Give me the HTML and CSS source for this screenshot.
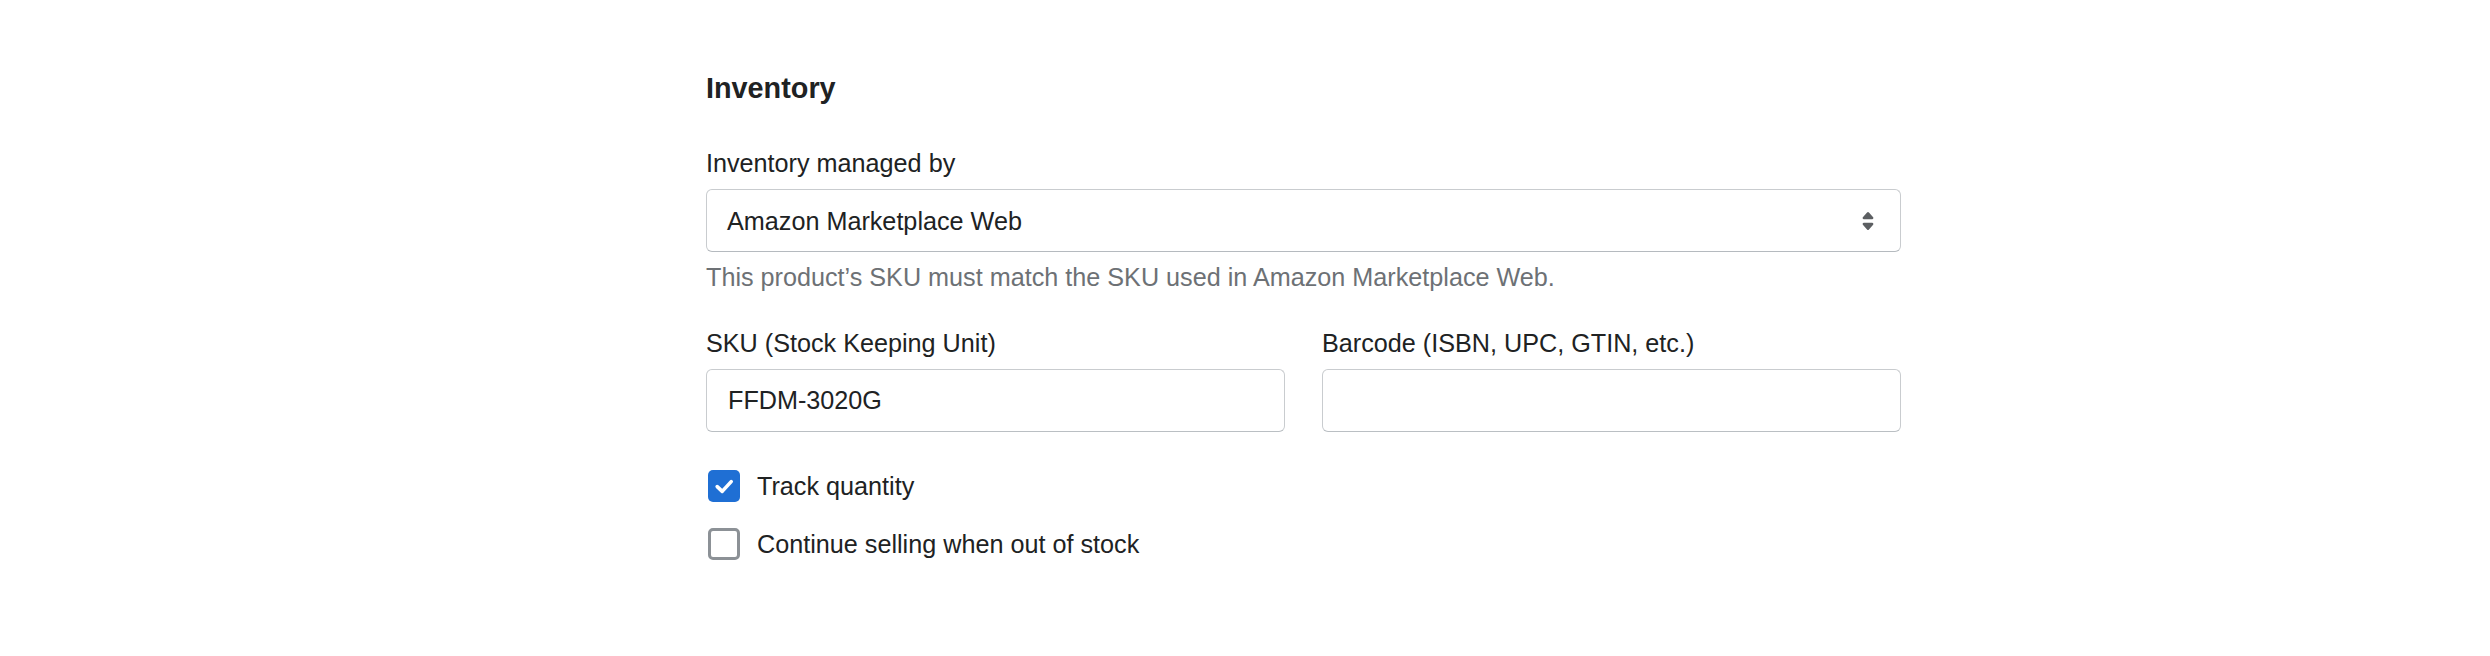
FILE: index.html
```html
<!DOCTYPE html>
<html lang="en">
<head>
<meta charset="utf-8">
<title>Inventory</title>
<link rel="stylesheet" href="styles.css">
</head>
<body>
<section class="inventory">
  <h2 class="heading">Inventory</h2>

  <div class="field field-managed">
    <div class="label">Inventory managed by</div>
    <div class="select">
      <span class="select-value">Amazon Marketplace Web</span>
      <svg class="select-icon" viewBox="0 0 20 20" width="36" height="36" aria-hidden="true">
        <path d="M7.676 9h4.648c.563 0 .879-.603.53-1.014L10.531 5.24a.708.708 0 0 0-1.062 0L7.145 7.986C6.798 8.397 7.113 9 7.676 9zm4.648 2H7.676c-.563 0-.878.603-.53 1.014l2.323 2.746a.708.708 0 0 0 1.062 0l2.323-2.746c.349-.411.033-1.014-.53-1.014z"/>
      </svg>
    </div>
    <div class="help">This product’s SKU must match the SKU used in Amazon Marketplace Web.</div>
  </div>

  <div class="row">
    <div class="field">
      <div class="label">SKU (Stock Keeping Unit)</div>
      <input class="text" type="text" value="FFDM-3020G">
    </div>
    <div class="field">
      <div class="label">Barcode (ISBN, UPC, GTIN, etc.)</div>
      <input class="text" type="text" value="">
    </div>
  </div>

  <div class="checks">
    <label class="check">
      <span class="box box-on">
        <svg viewBox="0 0 32 32" width="32" height="32" aria-hidden="true">
          <path d="M9.2 16.6 L14.2 21.4 L23.2 11.6"/>
        </svg>
      </span>
      <span class="check-text">Track quantity</span>
    </label>
    <label class="check">
      <span class="box box-off"></span>
      <span class="check-text">Continue selling when out of stock</span>
    </label>
  </div>
</section>
</body>
</html>
```

FILE: styles.css
```css
html, body {
  margin: 0;
  padding: 0;
  background: #ffffff;
}

body {
  font-family: "Liberation Sans", Arial, Helvetica, sans-serif;
  color: #202223;
  font-size: 25.2px;
  line-height: 36px;
}

.inventory {
  width: 1195px;
  margin-left: 706px;
  padding-top: 67px;
}

.heading {
  margin: 0;
  font-size: 28.8px;
  line-height: 43px;
  font-weight: 700;
}

.field-managed {
  margin-top: 35px;
}

.label {
  margin-bottom: 8px;
}

.select {
  box-sizing: border-box;
  height: 63px;
  display: flex;
  align-items: center;
  justify-content: space-between;
  padding: 0 14px 0 20px;
  border: 1px solid #c9cccf;
  border-bottom-color: #b5babf;
  border-radius: 6px;
  background: #ffffff;
}

.select-icon {
  display: block;
  fill: #5c5f62;
}

.help {
  margin-top: 7px;
  color: #6d7175;
}

.row {
  margin-top: 30px;
  display: grid;
  grid-template-columns: 1fr 1fr;
  column-gap: 37px;
}

.text {
  box-sizing: border-box;
  display: block;
  width: 100%;
  height: 63px;
  margin: 0;
  padding: 0 20px 0 21px;
  border: 1px solid #c9cccf;
  border-bottom-color: #babfc3;
  border-radius: 6px;
  background: #ffffff;
  font-family: inherit;
  font-size: 25.2px;
  color: #202223;
  outline: none;
}

.checks {
  margin-top: 36px;
  display: flex;
  flex-direction: column;
  row-gap: 22px;
}

.check {
  display: flex;
  align-items: center;
  column-gap: 17px;
  padding-left: 2px;
}

.box {
  box-sizing: border-box;
  width: 32px;
  height: 32px;
  flex: none;
  border-radius: 5px;
  display: flex;
  align-items: center;
  justify-content: center;
}

.box-on {
  background: #1f6fd4;
}

.box-on svg {
  display: block;
  fill: none;
  stroke: #ffffff;
  stroke-width: 3.6;
  stroke-linecap: round;
  stroke-linejoin: round;
}

.box-off {
  border: 3px solid #8c9196;
  background: #ffffff;
}
```
